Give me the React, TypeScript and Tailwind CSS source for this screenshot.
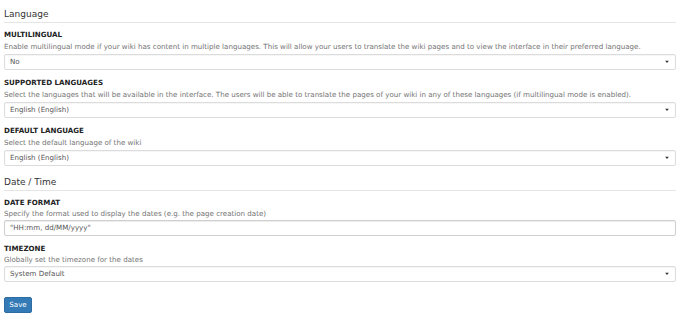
const sans = { fontFamily: '"DejaVu Sans", Verdana, sans-serif' };

const Caret = () => (
  <svg className="absolute right-[6px] top-1/2 -translate-y-1/2" width="4" height="3" viewBox="0 0 4 3">
    <path d="M0 0 L4 0 L2 2.5 Z" fill="#333" />
  </svg>
);

const SelectBox = ({ value }: { value: string }) => (
  <div className="relative flex h-[16px] items-center rounded-[2px] border border-[#dcdcdc] bg-white pl-[5px] text-[7.1px] text-[#555] shadow-[inset_0_1px_1px_rgba(0,0,0,0.04)]">
    {value}
    <Caret />
  </div>
);

const TextBox = ({ value }: { value: string }) => (
  <div className="flex h-[16px] items-center rounded-[2px] border border-[#cfcfcf] bg-white pl-[5px] text-[7.1px] text-[#555] shadow-[inset_0_1px_1px_rgba(0,0,0,0.075)]">
    {value}
  </div>
);

type FieldProps = { label: string; help: string; tight?: boolean; children: React.ReactNode };

const Field = ({ label, help, tight, children }: FieldProps) => (
  <div className="mb-[8px]">
    <div className="text-[7.1px] font-bold uppercase leading-[10px] text-[#222]">{label}</div>
    <div className={tight ? 'mt-[1px] text-[7.1px] leading-[10px] text-[#737373]' : 'mt-[2px] text-[7.1px] leading-[10px] text-[#737373]'}>
      {help}
    </div>
    <div className={tight ? 'mt-[1px]' : 'mt-[2px]'}>{children}</div>
  </div>
);

const Heading = ({ title }: { title: string }) => (
  <h4 className="mb-[7px] border-b border-[#e5e5e5] pb-[2px] text-[9px] font-normal leading-[12px] text-[#333]">
    {title}
  </h4>
);

export default function App() {
  return (
    <div className="min-h-[324px] w-[690px] bg-white" style={sans}>
      <div className="w-[676px] pl-[4px] pt-[8px]">
        <Heading title="Language" />
        <Field
          label="Multilingual"
          help="Enable multilingual mode if your wiki has content in multiple languages. This will allow your users to translate the wiki pages and to view the interface in their preferred language."
        >
          <SelectBox value="No" />
        </Field>
        <Field
          label="Supported Languages"
          help="Select the languages that will be available in the interface. The users will be able to translate the pages of your wiki in any of these languages (if multilingual mode is enabled)."
        >
          <SelectBox value="English (English)" />
        </Field>
        <Field label="Default Language" help="Select the default language of the wiki">
          <SelectBox value="English (English)" />
        </Field>

        <div className="pt-[2px]">
          <Heading title="Date / Time" />
        </div>
        <Field tight label="Date Format" help="Specify the format used to display the dates (e.g. the page creation date)">
          <TextBox value={'"HH:mm, dd/MM/yyyy"'} />
        </Field>
        <Field tight label="Timezone" help="Globally set the timezone for the dates">
          <SelectBox value="System Default" />
        </Field>

        <button className="mt-[4px] h-[16px] w-[28px] rounded-[2px] border border-[#2e6da4] bg-[#337ab7] text-[7.1px] leading-none text-white">
          Save
        </button>
      </div>
    </div>
  );
}
